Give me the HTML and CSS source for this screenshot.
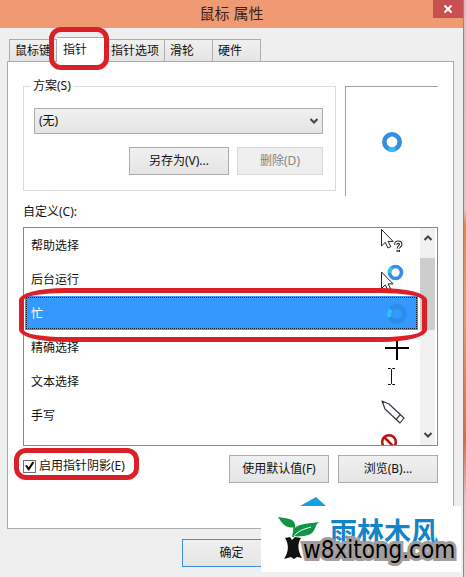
FILE: index.html
```html
<!DOCTYPE html>
<html lang="zh-CN">
<head>
    <meta charset="UTF-8">
    <meta name="viewport" content="width=device-width, initial-scale=1.0">
    <title>鼠标 属性</title>
    <link rel="stylesheet" href="styles.css">
</head>
<body>
    <div class="window">
        <div class="title-bar">
            <h1>鼠标 属性</h1>
            <button class="close" type="button">
                <svg width="10" height="10" viewBox="0 0 10 10"><path d="M1.500 1.500l7 7M8.500 1.500l-7 7" stroke="#fff" stroke-width="2"/></svg>
            </button>
        </div>

        <div class="tabs">
            <button class="tab tab-keys" type="button">鼠标键</button>
            <button class="tab active" type="button">指针<span class="mark mark-tab"></span></button>
            <button class="tab tab-options" type="button">指针选项</button>
            <button class="tab" type="button">滑轮</button>
            <button class="tab" type="button">硬件</button>
        </div>

        <div class="panel">
            <div class="scheme-row">
                <!-- 方案 -->
                <fieldset class="scheme">
                    <legend><label for="scheme">方案(S)</label></legend>
                    <div class="select-box">
                        <select id="scheme">
                            <option>(无)</option>
                        </select>
                        <svg class="arrow" width="8" height="6" viewBox="0 0 8 6"><path d="M.5 1L4 4.500 7.500 1" fill="none" stroke="#444" stroke-width="2"/></svg>
                    </div>
                    <div class="buttons">
                        <button class="btn" type="button">另存为(V)...</button>
                        <button class="btn btn-delete" type="button" disabled>删除(D)</button>
                    </div>
                </fieldset>
                <div class="preview">
                    <svg width="22" height="22" viewBox="0 0 22 22">
                        <circle cx="11" cy="11" r="7.700" fill="none" stroke="#348fe4" stroke-width="4.600"/>
                        <path d="M7.500 17.900a7.700 7.700 0 0 0 7 0" fill="none" stroke="#35bdf0" stroke-width="4.600"/>
                    </svg>
                </div>
            </div>

            <!-- 自定义 -->
            <div class="list-label" id="custom-label">自定义(C):</div>
            <div class="list-wrap">
                <div class="list">
                    <ul class="items" role="listbox" aria-labelledby="custom-label">
                        <li role="option">帮助选择
                            <svg class="cursor" viewBox="0 0 40 34">
                                <path d="M3.500 1.500v16.500l3.800-3.600 2.700 5.600 2.800-1.400-2.700-5.200h5z" fill="#fff" stroke="#222"/>
                                <path d="M17.700 16.800c0-3.600 5-3.200 5-.4 0 2-2.400 1.800-2.400 4.200M20.300 22v2" fill="none" stroke="#222" stroke-width="3.400"/>
                                <path d="M17.700 16.800c0-3.600 5-3.200 5-.4 0 2-2.400 1.800-2.400 4.200M20.300 22.400v1.200" fill="none" stroke="#fff" stroke-width="1.300"/>
                            </svg>
                        </li>
                        <li role="option">后台运行
                            <svg class="cursor" viewBox="0 0 40 34">
                                <circle cx="17.500" cy="10.500" r="6" fill="#fff" stroke="#348fe4" stroke-width="3.600"/>
                                <path d="M11.500 11a6 6 0 0 1 2.500-5.300" fill="none" stroke="#35c4f0" stroke-width="3.600"/>
                                <path d="M3.500 10v16.500l3.800-3.600 2.700 5.600 2.800-1.400-2.700-5.200h5z" fill="#fff" stroke="#222"/>
                            </svg>
                        </li>
                        <li class="selected" role="option" aria-selected="true">忙
                            <svg class="cursor" viewBox="0 0 40 34">
                                <circle cx="19" cy="18" r="7.500" fill="none" stroke="#2d8bea" stroke-width="5"/>
                                <path d="M11.600 21a8 8 0 0 1 1.200-7.500" fill="none" stroke="#2cc2fa" stroke-width="4"/>
                            </svg>
                        </li>
                        <li role="option">精确选择
                            <svg class="cursor" viewBox="0 0 40 34"><path d="M7 18h24M19 8v22" stroke="#000" stroke-width="2"/></svg>
                        </li>
                        <li role="option">文本选择
                            <svg class="cursor" viewBox="0 0 40 34"><path d="M10 4.500h2.500l1 1 1-1H17M13.500 5.500v14M10 20.500h2.500l1-1 1 1H17" fill="none" stroke="#111"/></svg>
                        </li>
                        <li role="option">手写
                            <svg class="cursor" viewBox="0 0 40 34"><path d="M4 3l7 3L26 20l-4 5L7 11zM22.500 16.500l-4.500 5M4 3l2 2" fill="#fff" stroke="#333a45" stroke-width="1.200" stroke-linejoin="round"/></svg>
                        </li>
                        <li>
                            <svg class="cursor" viewBox="0 0 40 34"><circle cx="11" cy="10" r="6.800" fill="#fff" stroke="#b5160f" stroke-width="2.500"/><path d="M6 5l10 10" stroke="#b5160f" stroke-width="2.500"/></svg>
                        </li>
                    </ul>
                    <div class="scrollbar">
                        <button class="scroll-btn" type="button"><svg width="8" height="6" viewBox="0 0 8 6"><path d="M.5 5L4 1.500 7.500 5" fill="none" stroke="#444" stroke-width="2"/></svg></button>
                        <div class="thumb"></div>
                        <button class="scroll-btn scroll-down" type="button"><svg width="8" height="6" viewBox="0 0 8 6"><path d="M.5 1L4 4.500 7.500 1" fill="none" stroke="#444" stroke-width="2"/></svg></button>
                    </div>
                </div>
                <span class="mark mark-row"></span>
            </div>

            <div class="options">
                <div class="shadow-option">
                    <input type="checkbox" id="shadow" checked>
                    <label for="shadow">启用指针阴影(E)</label>
                    <span class="mark mark-check"></span>
                </div>
                <div class="buttons">
                    <button class="btn" type="button">使用默认值(F)</button>
                    <button class="btn" type="button">浏览(B)...</button>
                </div>
            </div>
        </div>

        <div class="footer">
            <button class="btn btn-ok" type="button">确定</button>
        </div>
    </div>

    <!-- 水印 -->
    <div class="watermark">
        <svg class="roof" width="26" height="9" viewBox="0 0 26 9"><path d="M0 9L16 0l10 9z" fill="#12a0e0"/></svg>
        <svg class="sprout" width="46" height="46" viewBox="0 0 46 46">
            <path d="M2 1c5 1 14 1 16 5 1 2 1 3 1 5-8 2-12-2-17-10z" fill="#129447"/>
            <path d="M43 6c-4 1-20 1-24 6-2 3-2 5-2 8 6 1 16 0 19-3 4-4 3-8 7-11z" fill="#129447"/>
            <path d="M18 20c4-5 10-7 17-9" fill="none" stroke="#fff" stroke-width="1"/>
            <path d="M18 8c1 4 0 8-1 13" fill="none" stroke="#129447" stroke-width="2"/>
            <path d="M9 22l5-1 2 3 3-3 6 1c-4 6-3 13 1 20l-5-1-3 2-3-2-7 2c5-7 5-15 1-21z" fill="#111"/>
        </svg>
        <div class="brand">雨林木风</div>
        <div class="site">w8xitong.com</div>
    </div>
</body>
</html>
```
FILE: styles.css
```css
* {
    box-sizing: border-box;
}

body {
    margin: 0;
    min-height: 100vh;
    padding-right: 2px;
    position: relative;
    background: linear-gradient(#d8bcc0 0, #dfc4c4 210px, #d98a4c 225px, #e0a070 310px, #cf7048 440px, #e0c4c8 500px, #e4ccd2 100%);
    font-family: "Noto Sans", "Noto Sans CJK SC", sans-serif;
    font-size: 12px;
    line-height: 16px;
    color: #111;
}

button, select, input {
    font: inherit;
    color: inherit;
    margin: 0;
}

svg {
    display: block;
}

.window {
    min-height: 100vh;
    background: #efefef;
    border-right: 1px solid #b87868;
}

/* 标题栏 */
.title-bar {
    position: relative;
    height: 28px;
    background: #f09a73;
}

h1 {
    margin: 0;
    font-size: 15px;
    font-weight: normal;
    line-height: 26px;
    text-align: center;
    color: #3c2218;
}

.close {
    position: absolute;
    top: 0;
    right: 0;
    width: 30px;
    height: 18px;
    padding: 0;
    display: flex;
    justify-content: center;
    align-items: center;
    border: none;
    background: #c75050;
}

/* 选项卡 */
.tabs {
    display: flex;
    align-items: flex-end;
    height: 33px;
    padding-left: 9px;
}

.tab {
    width: 48px;
    height: 22px;
    padding: 0 5px;
    border: 1px solid #acacac;
    border-bottom: none;
    border-left-width: 0;
    background: linear-gradient(#f0f0f0, #e5e5e5);
    text-align: left;
    white-space: nowrap;
}

.tab-keys {
    border-left-width: 1px;
}

.tab.active {
    position: relative;
    z-index: 1;
    width: 50px;
    height: 25px;
    margin-bottom: -1px;
    padding: 0 6px;
    background: #fff;
}

.tab-options {
    width: 58px;
    padding: 0 4px;
}

/* 内容区 */
.panel {
    margin: 0 9px 0 7px;
    padding: 16px 15px 45px;
    border: 1px solid #acacac;
    background: #fff;
}

.scheme-row {
    display: flex;
    align-items: flex-start;
    gap: 9px;
}

.scheme {
    flex: 1;
    min-width: 0;
    margin: 0;
    padding: 14px 12px 15px 10px;
    border: 1px solid #dcdcdc;
}

legend {
    margin-left: -3px;
    padding: 0 2px;
}

.select-box {
    position: relative;
    margin-bottom: 13px;
}

select {
    display: block;
    width: 100%;
    height: 26px;
    padding: 0 4px;
    border: 1px solid #acacac;
    border-radius: 0;
    background: linear-gradient(#f0f0f0, #e5e5e5);
    appearance: none;
}

.arrow {
    position: absolute;
    top: 10px;
    right: 5px;
}

.buttons {
    display: flex;
    justify-content: flex-end;
    gap: 8px;
}

.btn {
    width: 100px;
    height: 28px;
    padding: 0;
    border: 1px solid #acacac;
    background: linear-gradient(#f0f0f0, #e5e5e5);
}

.btn-delete {
    width: 86px;
    border-color: #d9d9d9;
    background: #efefef;
    color: #838383;
}

.btn-ok {
    border-color: #3c8fd8;
}

.preview {
    width: 93px;
    height: 110px;
    margin-top: 8px;
    display: flex;
    justify-content: center;
    align-items: center;
    border-top: 1px solid #a0a0a0;
    border-left: 1px solid #a0a0a0;
}

/* 指针列表 */
.list-label {
    margin: 8px 0 7px;
}

.list-wrap {
    position: relative;
}

.list {
    display: flex;
    height: 219px;
    padding: 0 2px 0 1px;
    border: 1px solid #828790;
    overflow: hidden;
}

.items {
    flex: 1;
    margin: 0;
    padding: 0;
    list-style: none;
}

.items li {
    display: flex;
    align-items: center;
    height: 34px;
    padding: 2px 0 0 6px;
}

.items .selected {
    background: #3399ff;
    color: #fff;
    outline: 1px dotted #123;
    outline-offset: -2px;
}

.cursor {
    width: 40px;
    height: 34px;
    margin-left: auto;
    align-self: flex-end;
}

.scrollbar {
    width: 17px;
    padding-left: 2px;
    display: flex;
    flex-direction: column;
    background: linear-gradient(#f0f0f0, #f0f0f0) content-box;
}

.scroll-btn {
    height: 20px;
    padding: 0;
    display: flex;
    justify-content: center;
    align-items: center;
    border: none;
    background: none;
}

.thumb {
    height: 72px;
    margin-top: 10px;
    background: #cdcdcd;
}

.scroll-down {
    margin-top: auto;
}

/* 启用阴影 */
.options {
    display: flex;
    justify-content: space-between;
    margin-top: 9px;
}

.shadow-option {
    position: relative;
    display: flex;
    align-items: center;
    gap: 3px;
    height: 22px;
}

.options .buttons {
    gap: 9px;
}

input[type="checkbox"] {
    width: 13px;
    height: 13px;
    border: 1px solid #707070;
    background: #fff;
    appearance: none;
}

input[type="checkbox"]:checked::before {
    content: "";
    display: block;
    width: 11px;
    height: 11px;
    background: #111;
    clip-path: polygon(10% 46%, 26% 40%, 42% 62%, 78% 8%, 94% 18%, 46% 92%, 38% 92%);
}

/* 红色标记 */
.mark {
    position: absolute;
    border: 5px solid #dc2028;
    pointer-events: none;
}

.mark-tab {
    top: -11px;
    left: -8px;
    right: -3px;
    bottom: -8px;
    border-radius: 12px;
}

.mark-row {
    top: 61px;
    left: -4px;
    right: 11px;
    height: 54px;
    border-radius: 46px / 12px;
}

.mark-check {
    top: -7px;
    left: -9px;
    right: -14px;
    bottom: -3px;
    border-radius: 12px;
}

.footer {
    display: flex;
    justify-content: center;
    padding: 10px 0;
}

/* 水印 */
.watermark {
    position: absolute;
    right: 5px;
    bottom: 5px;
    width: 200px;
    height: 66px;
    background: #fff;
}

.roof {
    position: absolute;
    top: -9px;
    left: 39px;
}

.sprout {
    position: absolute;
    top: 10px;
    left: 15px;
}

.brand {
    position: absolute;
    top: 11px;
    left: 69px;
    font-family: "Noto Sans CJK SC", sans-serif;
    font-size: 27px;
    font-weight: bold;
    line-height: 28px;
    color: #1583c8;
}

.site {
    position: absolute;
    top: 28px;
    left: 42px;
    font-family: "DejaVu Sans Condensed", "Liberation Sans", sans-serif;
    font-size: 24px;
    line-height: 32px;
    color: #000;
    -webkit-text-stroke: 6px #a39c9c;
    paint-order: stroke fill;
}
```
